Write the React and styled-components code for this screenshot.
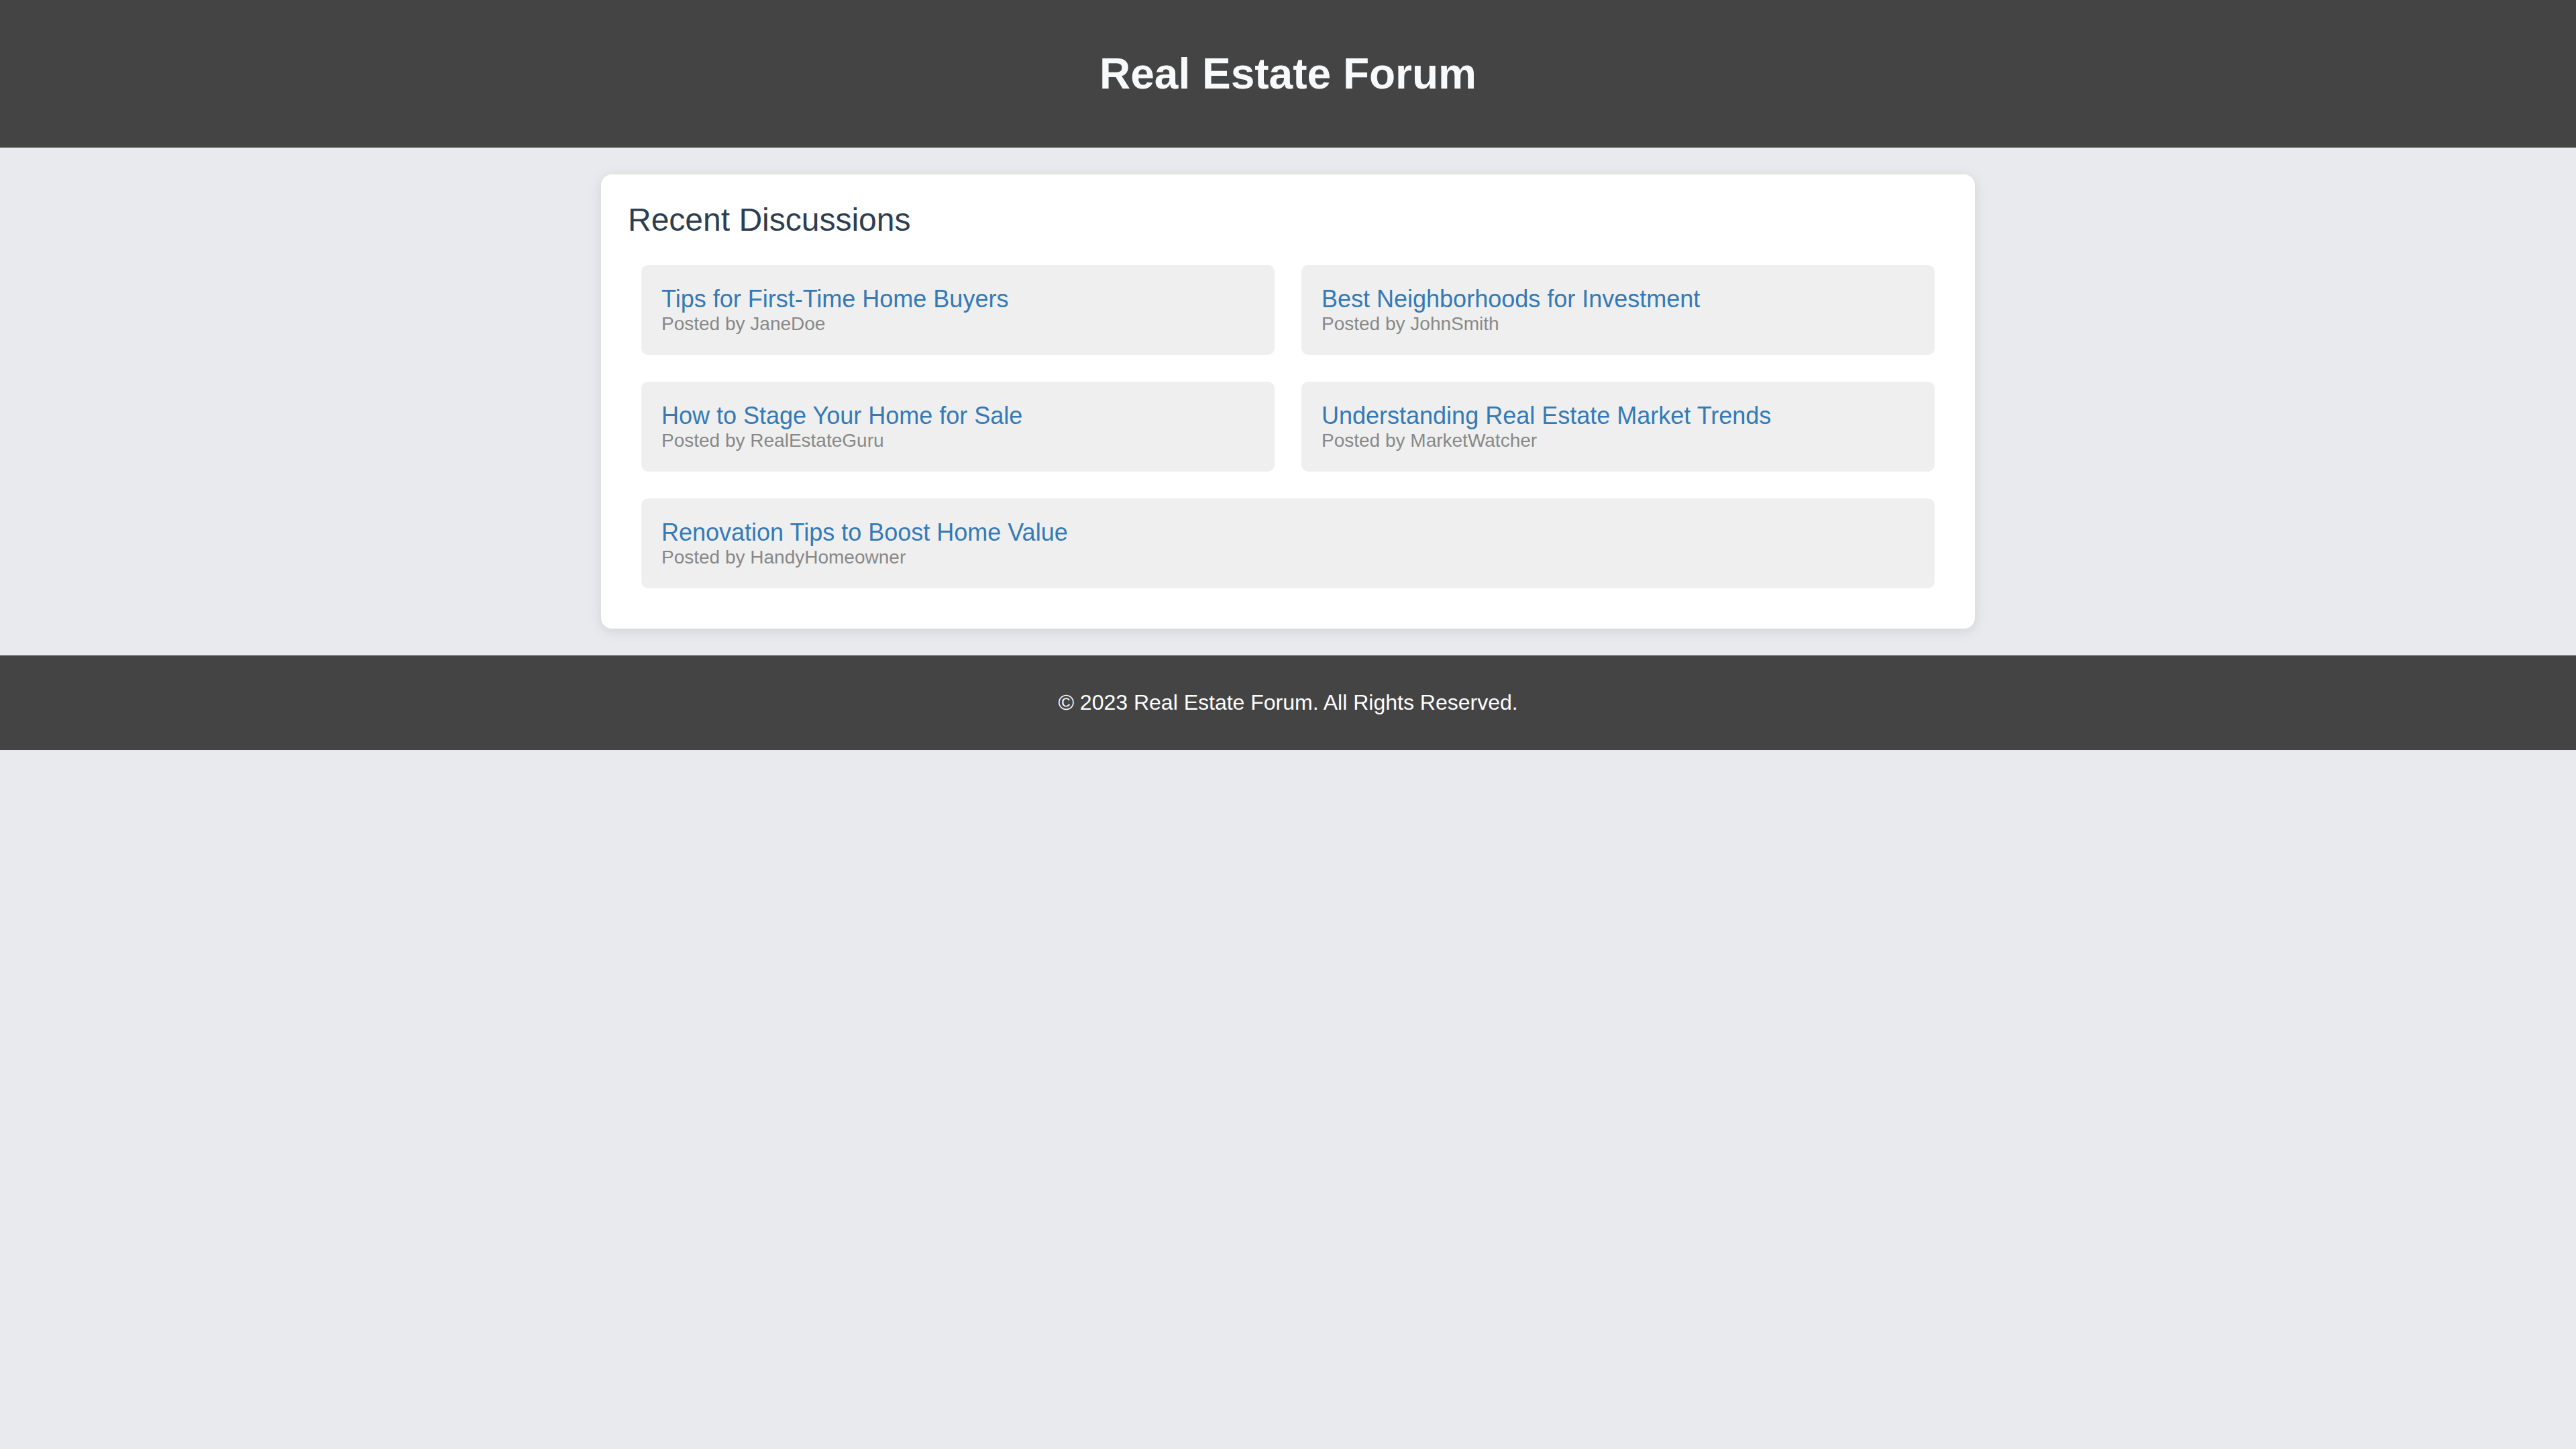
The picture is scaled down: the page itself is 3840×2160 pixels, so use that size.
import React from "react";
import styled, { createGlobalStyle } from "styled-components";

const GlobalStyle = createGlobalStyle`
  html, body {
    margin: 0;
    padding: 0;
    background: #e9eaee;
  }
  body {
    font-family: "Liberation Sans", Arial, Helvetica, sans-serif;
    font-size: 32px;
  }
`;

const Page = styled.div`
  display: flex;
  flex-direction: column;
  min-height: 100vh;
  background: #e9eaee;
`;

const Header = styled.header`
  background: #444444;
  padding: 30px 0;
  text-align: center;
`;

const SiteTitle = styled.h1`
  margin: 0.67em 0;
  font-size: 64px;
  font-weight: 700;
  color: #f8f9fa;
  line-height: normal;
`;

const Main = styled.main`
  padding: 40px 0;
  display: flex;
  justify-content: center;
`;

const Card = styled.section`
  width: 2048px;
  box-sizing: border-box;
  background: #ffffff;
  border-radius: 16px;
  padding: 40px;
  box-shadow: 0 4px 20px rgba(0, 0, 0, 0.1);
`;

const SectionTitle = styled.h2`
  margin: 0 0 20px;
  font-size: 48px;
  font-weight: 400;
  color: #2c3e50;
  line-height: normal;
`;

const Grid = styled.div`
  display: grid;
  grid-template-columns: 1fr 1fr;
`;

const Thread = styled.article`
  grid-column: ${(p) => (p.$wide ? "1 / -1" : "auto")};
  margin: 20px;
  padding: 30px;
  background: #efefef;
  border-radius: 10px;
`;

const ThreadTitle = styled.a`
  display: block;
  font-size: 36px;
  color: #337ab7;
  text-decoration: none;
  line-height: normal;
`;

const ThreadMeta = styled.div`
  font-size: 28px;
  color: #888888;
  line-height: normal;
`;

const Footer = styled.footer`
  background: #444444;
  padding: 20px 0;
  text-align: center;
`;

const FooterText = styled.p`
  margin: 32px 0;
  font-size: 32px;
  color: #ffffff;
  line-height: normal;
`;

const threads = [
  { title: "Tips for First-Time Home Buyers", author: "JaneDoe" },
  { title: "Best Neighborhoods for Investment", author: "JohnSmith" },
  { title: "How to Stage Your Home for Sale", author: "RealEstateGuru" },
  { title: "Understanding Real Estate Market Trends", author: "MarketWatcher" },
  { title: "Renovation Tips to Boost Home Value", author: "HandyHomeowner", wide: true },
];

export default function App() {
  return (
    <Page>
      <GlobalStyle />
      <Header>
        <SiteTitle>Real Estate Forum</SiteTitle>
      </Header>
      <Main>
        <Card>
          <SectionTitle>Recent Discussions</SectionTitle>
          <Grid>
            {threads.map((t) => (
              <Thread key={t.title} $wide={t.wide}>
                <ThreadTitle href="#">{t.title}</ThreadTitle>
                <ThreadMeta>Posted by {t.author}</ThreadMeta>
              </Thread>
            ))}
          </Grid>
        </Card>
      </Main>
      <Footer>
        <FooterText>© 2023 Real Estate Forum. All Rights Reserved.</FooterText>
      </Footer>
    </Page>
  );
}
